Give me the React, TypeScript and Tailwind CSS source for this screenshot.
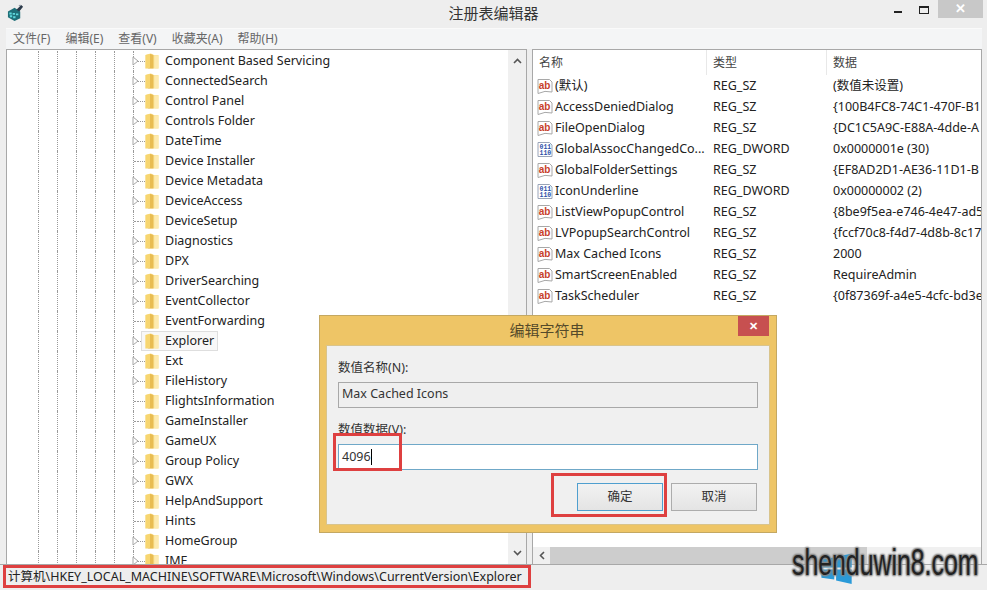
import React from "react";

const FONT = "font-['Noto_Sans','Noto_Sans_CJK_SC',sans-serif]";

const treeItems: [string, boolean][] = [
  ["Component Based Servicing", true],
  ["ConnectedSearch", true],
  ["Control Panel", true],
  ["Controls Folder", true],
  ["DateTime", true],
  ["Device Installer", false],
  ["Device Metadata", true],
  ["DeviceAccess", true],
  ["DeviceSetup", false],
  ["Diagnostics", true],
  ["DPX", true],
  ["DriverSearching", true],
  ["EventCollector", true],
  ["EventForwarding", false],
  ["Explorer", true],
  ["Ext", true],
  ["FileHistory", true],
  ["FlightsInformation", false],
  ["GameInstaller", false],
  ["GameUX", true],
  ["Group Policy", true],
  ["GWX", true],
  ["HelpAndSupport", false],
  ["Hints", false],
  ["HomeGroup", true],
  ["IME", true],
];

const values: [string, "sz" | "bin", string, string][] = [
  ["(默认)", "sz", "REG_SZ", "(数值未设置)"],
  ["AccessDeniedDialog", "sz", "REG_SZ", "{100B4FC8-74C1-470F-B1"],
  ["FileOpenDialog", "sz", "REG_SZ", "{DC1C5A9C-E88A-4dde-A"],
  ["GlobalAssocChangedCo...", "bin", "REG_DWORD", "0x0000001e (30)"],
  ["GlobalFolderSettings", "sz", "REG_SZ", "{EF8AD2D1-AE36-11D1-B"],
  ["IconUnderline", "bin", "REG_DWORD", "0x00000002 (2)"],
  ["ListViewPopupControl", "sz", "REG_SZ", "{8be9f5ea-e746-4e47-ad5"],
  ["LVPopupSearchControl", "sz", "REG_SZ", "{fccf70c8-f4d7-4d8b-8c17"],
  ["Max Cached Icons", "sz", "REG_SZ", "2000"],
  ["SmartScreenEnabled", "sz", "REG_SZ", "RequireAdmin"],
  ["TaskScheduler", "sz", "REG_SZ", "{0f87369f-a4e5-4cfc-bd3e"],
];

const FolderIcon = () => (
  <svg width="14" height="18" viewBox="0 0 14 18" className="shrink-0">
    <path d="M0.5 3 L6 1.5 L9 3 H13.5 V16.5 H0.5 Z" fill="#fbe496" />
    <path d="M0.5 3 L5 1.8 V15.5 L0.5 16.5 Z" fill="#f7d671" />
    <path d="M5 1.8 L8.5 3 V16.5 H2 L5 15.5 Z" fill="#e8bc52" />
    <path d="M9.5 3.5 H13.5 V16.5 H9.5 Z" fill="#fdeab0" />
  </svg>
);

const AbIcon = () => (
  <svg width="16" height="17" viewBox="0 0 16 17" className="shrink-0">
    <path d="M1 1.5 H12.5 L15 4 V14 Q8 12 1 15.5 Z" fill="#fff" stroke="#a8a8a8" strokeWidth="1" />
    <text x="1.8" y="10.5" fontSize="10" fontWeight="700" fill="#c8402a" fontFamily="Liberation Sans">ab</text>
  </svg>
);

const BinIcon = () => (
  <svg width="16" height="17" viewBox="0 0 16 17" className="shrink-0">
    <path d="M1 1.5 H12.5 L15 4 V15.5 H1 Z" fill="#fff" stroke="#9aa4b8" strokeWidth="1" />
    <text x="2.5" y="8" fontSize="6.5" fontWeight="700" fill="#2a4fa8" fontFamily="Liberation Mono">011</text>
    <text x="2.5" y="14" fontSize="6.5" fontWeight="700" fill="#2a4fa8" fontFamily="Liberation Mono">110</text>
  </svg>
);

const RegeditIcon = () => (
  <svg width="17" height="17" viewBox="0 0 18 18">
    <path d="M1 8 L8 4 L14 8 V15 L8 18 L1 14 Z" fill="#1f6f78" />
    <path d="M2.5 9 H5 V11 H2.5 Z M6 9.5 H8.5 V11.5 H6 Z M9.5 10 H12 V12 H9.5 Z M3 12 H5.5 V14 H3 Z M6.5 13 H9 V15 H6.5 Z" fill="#5fd8dc" />
    <path d="M10 6 L15 1 L17 3 L13 8 Z" fill="#2b3a4a" />
    <path d="M12 2 L14 0.5 L15 2 Z" fill="#8a94a0" />
  </svg>
);

const ChevronUp = () => (
  <svg width="9" height="6" viewBox="0 0 9 6">
    <path d="M1 5 L4.5 1.5 L8 5" fill="none" stroke="#555" strokeWidth="1.6" />
  </svg>
);

const ChevronDown = () => (
  <svg width="9" height="6" viewBox="0 0 9 6">
    <path d="M1 1 L4.5 4.5 L8 1" fill="none" stroke="#555" strokeWidth="1.6" />
  </svg>
);

const ChevronLeft = () => (
  <svg width="6" height="9" viewBox="0 0 6 9">
    <path d="M5 1 L1.5 4.5 L5 8" fill="none" stroke="#555" strokeWidth="1.6" />
  </svg>
);

const TreeRow = ({ name, expandable }: { name: string; expandable: boolean }) => {
  const selected = name === "Explorer";
  return (
    <div className="h-[20px] flex items-center shrink-0">
      <div className="w-[126px] h-full flex shrink-0 pl-[31px] gap-[18px]">
        <span className="h-full border-l border-dotted border-[#9a9a9a]" />
        <span className="h-full border-l border-dotted border-[#9a9a9a]" />
        <span className="h-full border-l border-dotted border-[#9a9a9a]" />
        <span className="h-full border-l border-dotted border-[#9a9a9a]" />
        <span className="h-full border-l border-dotted border-[#9a9a9a]" />
      </div>
      <div className="w-[5px] h-full flex items-center shrink-0 border-l border-dotted border-[#9a9a9a]">
        {expandable ? (
          <svg width="7" height="10" viewBox="0 0 7 10" className="shrink-0 -ml-[2px] relative">
            <path d="M1 1 L6 5 L1 9 Z" fill="#fff" stroke="#a6a6a6" />
          </svg>
        ) : (
          <span className="w-full border-t border-dotted border-[#9a9a9a]" />
        )}
      </div>
      <span className="w-[7px] border-t border-dotted border-[#9a9a9a] shrink-0" />
      {selected ? (
        <div className="-ml-[4px] h-[20px] pl-[3px] pr-[3px] flex items-center bg-[#f8f8f8] border border-[#dedede]">
          <FolderIcon />
          <span className="ml-[6px] text-[12.5px] text-[#222]">{name}</span>
        </div>
      ) : (
        <>
          <FolderIcon />
          <span className="ml-[6px] text-[12.5px] text-[#222] whitespace-nowrap">{name}</span>
        </>
      )}
    </div>
  );
};

const ValueRow = ({ row }: { row: (typeof values)[number] }) => (
  <div className="h-[21px] flex items-center shrink-0 text-[12.5px] text-[#222] whitespace-nowrap">
    <div className="w-[180px] pl-[4px] flex items-center gap-[2px] overflow-hidden shrink-0">
      {row[1] === "sz" ? <AbIcon /> : <BinIcon />}
      <span>{row[0]}</span>
    </div>
    <div className="w-[120px] shrink-0">{row[2]}</div>
    <div>{row[3]}</div>
  </div>
);

const App = () => {
  return (
    <div className={`relative w-[987px] h-[590px] overflow-hidden bg-[#eeeeee] flex flex-col ${FONT}`}>
      {/* title bar */}
      <div className="h-[28px] shrink-0 flex items-center">
        <div className="w-[151px] pl-[7px] mb-[3px] shrink-0">
          <RegeditIcon />
        </div>
        <div className="flex-1 text-center text-[15px] text-[#333] pb-[2px]">注册表编辑器</div>
        <div className="w-[151px] h-[19px] self-start flex items-start justify-end shrink-0 pr-[4px]">
          <div className="w-[26px] h-[19px] flex items-center justify-center">
            <span className="w-[8px] h-[2px] bg-[#222] mt-[5px]" />
          </div>
          <div className="w-[26px] h-[19px] flex items-center justify-center">
            <span className="w-[10px] h-[8px] border border-[#222] border-t-2" />
          </div>
          <div className="w-[45px] h-[18px] bg-[#c8c8c8] flex items-center justify-center text-white text-[13px] font-bold ml-[1px]">
            ✕
          </div>
        </div>
      </div>

      {/* menu */}
      <div className="h-[21px] shrink-0 ml-[6px] mr-[5px] bg-[#f4f5f6] border-t border-[#fafafa] flex items-center gap-[15px] pl-[7px] text-[12px] text-[#666]">
        <span>文件(F)</span>
        <span>编辑(E)</span>
        <span>查看(V)</span>
        <span>收藏夹(A)</span>
        <span>帮助(H)</span>
      </div>

      {/* panes */}
      <div className="flex-1 min-h-0 flex ml-[6px] mr-[5px] gap-[5px]">
        <div className="w-[521px] shrink-0 border border-[#a8a8a8] border-b-0 bg-white flex overflow-hidden">
          <div className="flex-1 min-w-0 flex flex-col overflow-hidden pt-[1px]">
            {treeItems.map(([name, expandable]) => (
              <TreeRow key={name} name={name} expandable={expandable} />
            ))}
          </div>
          <div className="w-[18px] shrink-0 bg-[#f0f0f0] flex flex-col items-center justify-between py-[8px]">
            <ChevronUp />
            <ChevronDown />
          </div>
        </div>
        <div className="flex-1 min-w-0 border border-[#a8a8a8] border-b-0 bg-white flex flex-col overflow-hidden">
          <div className="h-[26px] shrink-0 flex items-center text-[12px] text-[#444] pb-[1px]">
            <div className="w-[174px] h-full pl-[6px] flex items-center border-r border-[#e8e8e8] shrink-0">名称</div>
            <div className="w-[120px] h-full pl-[6px] flex items-center border-r border-[#e8e8e8] shrink-0">类型</div>
            <div className="pl-[6px]">数据</div>
          </div>
          <div className="flex-1 min-h-0 flex flex-col">
            {values.map((row) => (
              <ValueRow key={row[0]} row={row} />
            ))}
          </div>
          <div className="h-[17px] shrink-0 bg-[#f0f0f0] flex items-center">
            <div className="w-[17px] flex justify-center shrink-0">
              <ChevronLeft />
            </div>
            <div className="w-[317px] h-full bg-[#cdcdcd]" />
          </div>
        </div>
      </div>

      {/* status bar */}
      <div className="h-[26px] shrink-0 border-t border-[#a8a8a8] flex items-center pl-[8px] text-[12.5px] text-[#222] whitespace-nowrap">
        计算机\HKEY_LOCAL_MACHINE\SOFTWARE\Microsoft\Windows\CurrentVersion\Explorer
      </div>

      {/* edit dialog */}
      <div className="absolute left-[319px] top-[315px] w-[458px] h-[218px] bg-[#eec566] border border-[#c4a862] flex flex-col px-[6px] pb-[7px]">
        <div className="h-[29px] shrink-0 flex items-center justify-center relative text-[15px] text-[#554a2a] pr-[2px]">
          编辑字符串
          <div className="absolute right-[1px] top-0 w-[31px] h-[20px] bg-[#c75050] flex items-center justify-center text-white text-[11px] font-bold">
            ✕
          </div>
        </div>
        <div className="flex-1 min-h-0 bg-[#f0f0f0] border border-[#d9c48c] px-[11px] flex flex-col text-[12.5px] text-[#333]">
          <div className="mt-[13px] h-[18px] flex items-center">数值名称(N):</div>
          <div className="mt-[5px] h-[26px] w-[420px] bg-[#efefef] border border-[#a8a8a8] flex items-center pl-[3px] pb-[1px]">
            Max Cached Icons
          </div>
          <div className="mt-[13px] h-[18px] flex items-center">数值数据(V):</div>
          <div className="mt-[5px] h-[26px] w-[420px] bg-white border border-[#6fa8c8] flex items-center pl-[3px]">
            4096
            <span className="h-[16px] w-px bg-black" />
          </div>
          <div className="mt-[13px] w-[420px] pr-[1px] flex justify-end gap-[8px]">
            <div className="w-[86px] h-[28px] border border-[#4f9fcf] bg-gradient-to-b from-[#f2f2f2] to-[#e4e4e4] flex items-center justify-center">
              确定
            </div>
            <div className="w-[86px] h-[28px] border border-[#acacac] bg-gradient-to-b from-[#f2f2f2] to-[#e4e4e4] flex items-center justify-center">
              取消
            </div>
          </div>
        </div>
      </div>

      {/* red annotation boxes */}
      <div className="absolute left-[333px] top-[433px] w-[69px] h-[38px] border-[3px] border-[#de4040]" />
      <div className="absolute left-[551px] top-[473px] w-[116px] h-[44px] border-[3px] border-[#de4040]" />
      <div className="absolute left-[3px] top-[565px] w-[528px] h-[23px] border-[3px] border-[#de4040]" />

      {/* watermark */}
      <div className="absolute left-[792px] top-[541px] w-[190px] h-[44px]">
        <svg width="34" height="33" viewBox="0 0 34 36" className="absolute left-[28px] top-[11px]">
          <path d="M0 8 L14 6 V17 H0 Z M16 5 L33 2 V17 H16 Z M0 19 H14 V30 L0 28 Z M16 19 H33 V35 L16 31 Z" fill="#2a9ad8" />
        </svg>
        <span
          className="absolute left-0 top-0 origin-left scale-x-[0.69] font-['Liberation_Sans',sans-serif] text-[36px] leading-[44px] text-[#222] whitespace-nowrap"
          style={{ textShadow: "0 0 2px #888, 1px 1px 2px #888, -1px -1px 2px #888, 1px -1px 2px #888, -1px 1px 2px #888" }}
        >
          shenduwin8.com
        </span>
      </div>
    </div>
  );
};

export default App;
